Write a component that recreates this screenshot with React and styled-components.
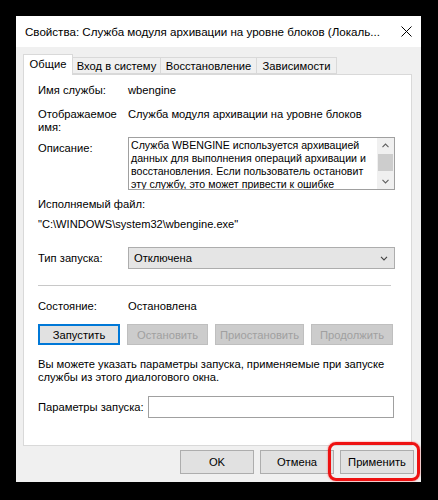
import styled, { createGlobalStyle } from 'styled-components';

const GlobalStyle = createGlobalStyle`
  html, body {
    margin: 0;
    padding: 0;
    background: #000;
  }
  body {
    width: 438px;
    height: 500px;
    overflow: hidden;
    font-family: "Liberation Sans", Arial, sans-serif;
    color: #000;
  }
`;

const UI_FONT = '11.2px';

const Screen = styled.div`
  width: 438px;
  height: 500px;
  box-sizing: border-box;
  padding: 16px 0 0 16px;
  background: #000;
`;

const Dialog = styled.div`
  width: 405px;
  height: 466px;
  background: #f0f0f0;
  display: flex;
  flex-direction: column;
`;

const TitleBar = styled.div`
  height: 31px;
  flex: none;
  background: #fff;
  display: flex;
  align-items: center;
  padding-left: 9px;
`;

const Title = styled.div`
  flex: 1;
  font-size: 11.6px;
  white-space: nowrap;
  overflow: hidden;
`;

const CloseBox = styled.div`
  width: 30px;
  height: 31px;
  display: flex;
  align-items: center;
  justify-content: center;
`;

const TabStrip = styled.div`
  display: flex;
  align-items: flex-end;
  margin: 7px 0 0 7px;
  height: 20px;
`;

const Tab = styled.div`
  position: relative;
  z-index: ${p => (p.$active ? 2 : 1)};
  width: ${p => p.$w}px;
  height: ${p => (p.$active ? 21 : 17)}px;
  margin-bottom: ${p => (p.$active ? -1 : 0)}px;
  margin-left: ${p => (p.$first ? 0 : -1)}px;
  box-sizing: border-box;
  border: 1px solid #d9d9d9;
  border-bottom: ${p => (p.$active ? 'none' : '1px solid #d9d9d9')};
  background: ${p => (p.$active ? '#fff' : '#f0f0f0')};
  display: flex;
  align-items: center;
  justify-content: center;
  padding-bottom: ${p => (p.$active ? 2 : 0)}px;
  font-size: ${UI_FONT};
  white-space: nowrap;
`;

const Panel = styled.div`
  height: 372px;
  margin: 0 9px 0 7px;
  box-sizing: border-box;
  background: #fff;
  border: 1px solid #d9d9d9;
  padding: 0 14px;
  display: flex;
  flex-direction: column;
  font-size: ${UI_FONT};
`;

const Row = styled.div`
  display: flex;
  align-items: flex-start;
  margin-top: ${p => p.$mt}px;
  line-height: ${p => p.$lh || 15}px;
  white-space: nowrap;
`;

const Label = styled.div`
  flex: none;
  width: ${p => p.$w || 90}px;
  padding-top: ${p => p.$pt || 0}px;
`;

const Value = styled.div`
  flex: none;
`;

const PathText = styled.div`
  font-size: 11.1px;
`;

const DescBox = styled.div`
  width: 267px;
  height: 53px;
  box-sizing: border-box;
  border: 1px solid #a0a0a0;
  display: flex;
  overflow: hidden;
`;

const DescText = styled.div`
  flex: 1;
  padding: 1px 0 0 2px;
  font-size: 10.6px;
  line-height: 13px;
  white-space: nowrap;
  overflow: hidden;
`;

const ScrollBar = styled.div`
  width: 17px;
  flex: none;
  background: #f0f0f0;
  display: flex;
  flex-direction: column;
`;

const ScrollArrow = styled.div`
  height: 15px;
  display: flex;
  align-items: center;
  justify-content: center;
`;

const ScrollThumb = styled.div`
  height: 17px;
  margin: 1px 1px 0;
  background: #cdcdcd;
`;

const ScrollTrack = styled.div`
  flex: 1;
`;

const Select = styled.div`
  width: 267px;
  height: 22px;
  box-sizing: border-box;
  border: 1px solid #adadad;
  background: #e5e5e5;
  display: flex;
  align-items: center;
  justify-content: space-between;
  padding: 0 6px 0 5px;
  line-height: 20px;
`;

const Separator = styled.div`
  margin-top: 16px;
  width: 353px;
  height: 1px;
  background: #c8c8c8;
`;

const ButtonRow = styled.div`
  display: flex;
  gap: 7px;
  margin-top: 10px;
`;

const Button = styled.div`
  width: ${p => p.$w}px;
  height: ${p => p.$h || 21}px;
  box-sizing: border-box;
  display: flex;
  align-items: center;
  justify-content: center;
  font-size: ${UI_FONT};
  white-space: nowrap;
  background: ${p => (p.$disabled ? '#cccccc' : '#e1e1e1')};
  color: ${p => (p.$disabled ? '#a0a0a0' : '#000')};
  border: 1px solid ${p => (p.$focused ? '#0078d7' : p.$disabled ? '#bfbfbf' : '#adadad')};
  box-shadow: ${p => (p.$focused ? 'inset 0 0 0 1px #0078d7' : 'none')};
`;

const InfoText = styled.div`
  margin-top: 13px;
  line-height: 13px;
  white-space: nowrap;
`;

const Input = styled.div`
  width: 246px;
  height: 22px;
  box-sizing: border-box;
  border: 1px solid #a0a0a0;
  background: #fff;
`;

const Footer = styled.div`
  display: flex;
  justify-content: flex-end;
  gap: 6px;
  margin-top: 4px;
  padding-right: 7px;
`;

const Highlight = styled.div`
  position: relative;
`;

const RedRing = styled.div`
  position: absolute;
  top: -8px;
  bottom: -7px;
  left: -12px;
  right: -6px;
  border: 3px solid #ee1111;
  border-radius: 8px;
  box-shadow: 0 0 2px rgba(255, 0, 0, 0.6);
  pointer-events: none;
`;

const CloseIcon = () => (
  <svg width="11" height="11" viewBox="0 0 11 11">
    <path d="M0.5 0.5 L10.5 10.5 M10.5 0.5 L0.5 10.5" stroke="#000" strokeWidth="1" fill="none" />
  </svg>
);

const Chevron = ({ up, color = '#606060', w = 7 }) => (
  <svg width={w} height="5" viewBox="0 0 7 5">
    <path
      d={up ? 'M0.5 4.2 L3.5 1 L6.5 4.2' : 'M0.5 0.8 L3.5 4 L6.5 0.8'}
      stroke={color}
      strokeWidth="1.1"
      fill="none"
    />
  </svg>
);

const tabs = [
  { label: 'Общие', w: 50, active: true },
  { label: 'Вход в систему', w: 89 },
  { label: 'Восстановление', w: 97 },
  { label: 'Зависимости', w: 81 },
];

const serviceButtons = [
  { label: 'Запустить', w: 82, focused: true },
  { label: 'Остановить', w: 81, disabled: true },
  { label: 'Приостановить', w: 89, disabled: true },
  { label: 'Продолжить', w: 82, disabled: true },
];

const App = () => {
  return (
    <Screen>
      <GlobalStyle />
      <Dialog>
        <TitleBar>
          <Title>Свойства: Служба модуля архивации на уровне блоков (Локаль...</Title>
          <CloseBox>
            <CloseIcon />
          </CloseBox>
        </TitleBar>

        <TabStrip>
          {tabs.map((t, i) => (
            <Tab key={t.label} $w={t.w} $active={t.active} $first={i === 0}>
              {t.label}
            </Tab>
          ))}
        </TabStrip>

        <Panel>
          <Row $mt={8}>
            <Label>Имя службы:</Label>
            <Value>wbengine</Value>
          </Row>

          <Row $mt={10} $lh={13}>
            <Label>
              Отображаемое
              <br />
              имя:
            </Label>
            <Value>Служба модуля архивации на уровне блоков</Value>
          </Row>

          <Row $mt={3}>
            <Label $pt={4}>Описание:</Label>
            <DescBox>
              <DescText>
                Служба WBENGINE используется архивацией
                <br />
                данных для выполнения операций архивации и
                <br />
                восстановления. Если пользователь остановит
                <br />
                эту службу, это может привести к ошибке
              </DescText>
              <ScrollBar>
                <ScrollArrow>
                  <Chevron up />
                </ScrollArrow>
                <ScrollThumb />
                <ScrollTrack />
                <ScrollArrow>
                  <Chevron />
                </ScrollArrow>
              </ScrollBar>
            </DescBox>
          </Row>

          <Row $mt={7}>
            <Label $w={200}>Исполняемый файл:</Label>
          </Row>

          <Row $mt={5}>
            <PathText>"C:\WINDOWS\system32\wbengine.exe"</PathText>
          </Row>

          <Row $mt={15} $lh={22}>
            <Label>Тип запуска:</Label>
            <Select>
              <span>Отключена</span>
              <Chevron color="#444" w={8} />
            </Select>
          </Row>

          <Separator />

          <Row $mt={13}>
            <Label>Состояние:</Label>
            <Value>Остановлена</Value>
          </Row>

          <ButtonRow>
            {serviceButtons.map(b => (
              <Button key={b.label} $w={b.w} $focused={b.focused} $disabled={b.disabled}>
                {b.label}
              </Button>
            ))}
          </ButtonRow>

          <InfoText>
            Вы можете указать параметры запуска, применяемые при запуске
            <br />
            службы из этого диалогового окна.
          </InfoText>

          <Row $mt={12} $lh={22}>
            <Label $w={110}>Параметры запуска:</Label>
            <Input />
          </Row>
        </Panel>

        <Footer>
          <Button $w={74} $h={24}>OK</Button>
          <Button $w={74} $h={24}>Отмена</Button>
          <Highlight>
            <Button $w={74} $h={24}>Применить</Button>
            <RedRing />
          </Highlight>
        </Footer>
      </Dialog>
    </Screen>
  );
};

export default App;
